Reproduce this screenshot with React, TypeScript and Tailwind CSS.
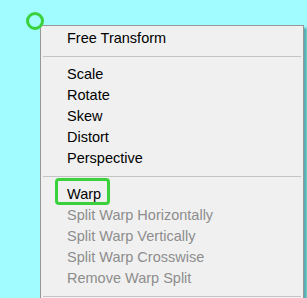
import React from "react";

const Sep = () => <div className="mx-[2px] my-[7px] h-px bg-[#c4c4c4]" />;

const Item = ({ label, disabled, hl }: { label: string; disabled?: boolean; hl?: boolean }) => (
  <div className={"flex h-[21px] items-center pl-[26px] " + (disabled ? "text-[#8d8d8d]" : "text-black")}>
    <span className="relative">
      {hl && (
        <span className="absolute left-[-12px] top-[-9px] h-[27px] w-[55px] rounded-[4px] border-[3px] border-[#3ad23a]" />
      )}
      {label}
    </span>
  </div>
);

export default function App() {
  return (
    <div
      className="relative h-[298px] w-[307px] overflow-hidden bg-[#a0fcff] pl-[40px] pt-[25px] text-[14.5px] leading-none"
      style={{ fontFamily: '"Liberation Sans", Arial, sans-serif' }}
    >
      <div className="h-[300px] w-[264px] border border-[#979797] bg-[#f0f0f0] pt-[2px] shadow-[3px_3px_2px_rgba(0,80,80,0.45)]">
        <Item label="Free Transform" />
        <Sep />
        <Item label="Scale" />
        <Item label="Rotate" />
        <Item label="Skew" />
        <Item label="Distort" />
        <Item label="Perspective" />
        <Sep />
        <Item label="Warp" hl />
        <Item label="Split Warp Horizontally" disabled />
        <Item label="Split Warp Vertically" disabled />
        <Item label="Split Warp Crosswise" disabled />
        <Item label="Remove Warp Split" disabled />
        <Sep />
      </div>
      <div className="absolute left-[26px] top-[12px] h-[18px] w-[18px] rounded-full border-[3px] border-[#3ad23a]" />
    </div>
  );
}
